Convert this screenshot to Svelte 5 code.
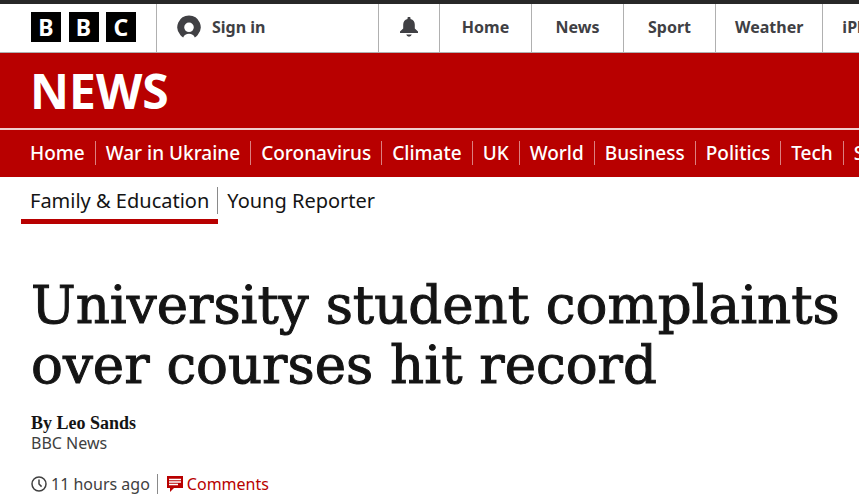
<script>
  const globalLinks = ['Home', 'News', 'Sport', 'Weather', 'iPlayer'];

  const sections = [
    'Home',
    'War in Ukraine',
    'Coronavirus',
    'Climate',
    'UK',
    'World',
    'Business',
    'Politics',
    'Tech',
    'Science'
  ];

  const subsections = ['Family & Education', 'Young Reporter'];
  let current = 'Family & Education';
</script>

<div class="page">
  <header class="global">
    <a class="logo" href="#home" aria-label="BBC">
      <span>B</span>
      <span>B</span>
      <span>C</span>
    </a>

    <a class="account" href="#signin">
      <svg width="24" height="24" viewBox="0 0 24 24" aria-hidden="true">
        <path
          fill="#404044"
          fill-rule="evenodd"
          d="M12 0.500a11.700 11.700 0 0 0-8.500 19.700c.8.900 1.700 1.700 2.700 2.300 1-2.500 3-3.700 5.800-3.700s4.800 1.200 5.800 3.700c1-.6 1.900-1.400 2.700-2.300A11.700 11.700 0 0 0 12 .5zm0 7a4.800 4.800 0 1 1 0 9.600 4.800 4.800 0 0 1 0-9.600z"
        />
      </svg>
      Sign in
    </a>

    <button class="alerts" type="button" aria-label="Notifications">
      <svg width="20" height="20" viewBox="0 0 20 20" aria-hidden="true">
        <path
          fill="#404044"
          d="M8.500 2V1.200a1.500 1.500 0 0 1 3 0V2c2.900.7 4.300 2.900 4.300 5.800v3.600l3.200 3V16H1v-1.600l3.200-3V7.800C4.200 4.900 5.600 2.700 8.500 2zM7.200 17.500h5.600a2.900 2.900 0 0 1-5.600 0z"
        />
      </svg>
    </button>

    <nav class="global-nav" aria-label="BBC">
      {#each globalLinks as link}
        <a href="#{link}">{link}</a>
      {/each}
    </nav>
  </header>

  <div class="brand">
    <a href="#news">NEWS</a>
  </div>

  <nav class="sections" aria-label="News">
    {#each sections as section}
      <a href="#{section}"><span>{section}</span></a>
    {/each}
  </nav>

  <nav class="subsections" aria-label="Sections">
    {#each subsections as section}
      <a href="#{section}" class:current={section === current}><span>{section}</span></a>
    {/each}
  </nav>

  <main>
    <h1>University student complaints over courses hit record</h1>

    <div class="byline">
      <strong>By Leo Sands</strong>
      <span>BBC News</span>
    </div>

    <div class="meta">
      <span class="time">
        <svg width="16" height="16" viewBox="0 0 16 16" aria-hidden="true">
          <circle cx="8" cy="8" r="7" fill="none" stroke="#404040" stroke-width="1.500" />
          <path d="M8 3.500V8l2.600 2.600" fill="none" stroke="#404040" stroke-width="1.500" />
        </svg>
        <time>11 hours ago</time>
      </span>
      <a class="comments" href="#comments">
        <svg width="16" height="16" viewBox="0 0 16 16" aria-hidden="true">
          <path fill="#b80000" d="M0 0h16v12H7l-4 4v-4H0z" />
          <path stroke="#fff" stroke-width="1.300" d="M2 3.500h12M2 6h12M2 8.500h9" />
        </svg>
        Comments
      </a>
    </div>
  </main>
</div>

<style>
  :global(body) {
    margin: 0;
    background: #fff;
  }

  .page {
    overflow: hidden;
    font-family: 'Noto Sans', 'Open Sans', sans-serif;
    color: #141414;
  }

  a {
    color: inherit;
    text-decoration: none;
  }

  svg {
    display: block;
    flex: none;
  }

  .global {
    display: flex;
    height: 48px;
    border-top: 4px solid #282828;
    border-bottom: 1px solid #b0b0b0;
    font-size: 16px;
    font-weight: 700;
    color: #404044;
  }

  .logo {
    display: flex;
    flex: none;
    align-items: center;
    justify-content: space-between;
    box-sizing: border-box;
    width: 156px;
    padding: 0 20px 2px 31px;
  }

  .logo span {
    width: 30px;
    background: #000;
    color: #fff;
    font-size: 23px;
    line-height: 30px;
    text-align: center;
  }

  .account {
    display: flex;
    flex: none;
    align-items: center;
    gap: 11px;
    box-sizing: border-box;
    width: 222px;
    padding: 0 0 2px 20px;
    border-left: 1px solid #b0b0b0;
  }

  .alerts {
    display: flex;
    flex: none;
    align-items: center;
    justify-content: center;
    box-sizing: border-box;
    width: 61px;
    padding: 0 0 2px;
    border: 0;
    border-left: 1px solid #b0b0b0;
    background: none;
  }

  .global-nav {
    display: flex;
    flex: 1;
    min-width: 0;
    overflow: hidden;
  }

  .global-nav a {
    flex: none;
    box-sizing: border-box;
    min-width: 92px;
    padding: 0 19px;
    border-left: 1px solid #b0b0b0;
    line-height: 47px;
    text-align: center;
  }

  .brand {
    padding: 0 30px;
    background: #b80000;
    color: #fff;
    font-size: 48px;
    font-weight: 700;
    line-height: 75px;
    border-bottom: 2px solid #f0cccc;
  }

  .brand a {
    display: block;
  }

  .sections {
    display: flex;
    padding: 11px 0 12px 20px;
    background: #b80000;
    color: #fff;
    font-size: 19px;
    font-weight: 500;
    line-height: 24px;
    white-space: nowrap;
  }

  .sections a {
    flex: none;
    padding: 0 10px;
    border-right: 1px solid #dc8080;
  }

  .subsections {
    display: flex;
    padding: 10px 0 0 21px;
    font-size: 20px;
    line-height: 27px;
    white-space: nowrap;
  }

  .subsections a {
    padding: 0 0 5px;
    border-bottom: 5px solid transparent;
  }

  .subsections a.current {
    border-color: #b80000;
  }

  .subsections span {
    display: block;
    padding: 0 9px;
  }

  .subsections .current span {
    padding-right: 8px;
    border-right: 1px solid #8a8a8a;
  }

  main {
    padding: 51px 0 0 31px;
  }

  h1 {
    margin: 0;
    font-family: 'DejaVu Serif', serif;
    font-size: 53px;
    font-weight: 400;
    line-height: 60px;
    -webkit-text-stroke: 1px #141414;
  }

  .byline {
    display: flex;
    flex-direction: column;
    margin-top: 18px;
    font-size: 16px;
    line-height: 20px;
    color: #404040;
  }

  .byline strong {
    font-family: 'Liberation Serif', serif;
    font-size: 18px;
    color: #141414;
  }

  .meta {
    display: flex;
    margin-top: 21px;
    font-size: 16px;
    line-height: 20px;
    color: #404040;
  }

  .time,
  .comments {
    display: flex;
    align-items: center;
    gap: 4px;
  }

  .time {
    padding-right: 7px;
    border-right: 1px solid #8a8a8a;
  }

  .comments {
    padding-left: 9px;
    color: #b80000;
  }
</style>
